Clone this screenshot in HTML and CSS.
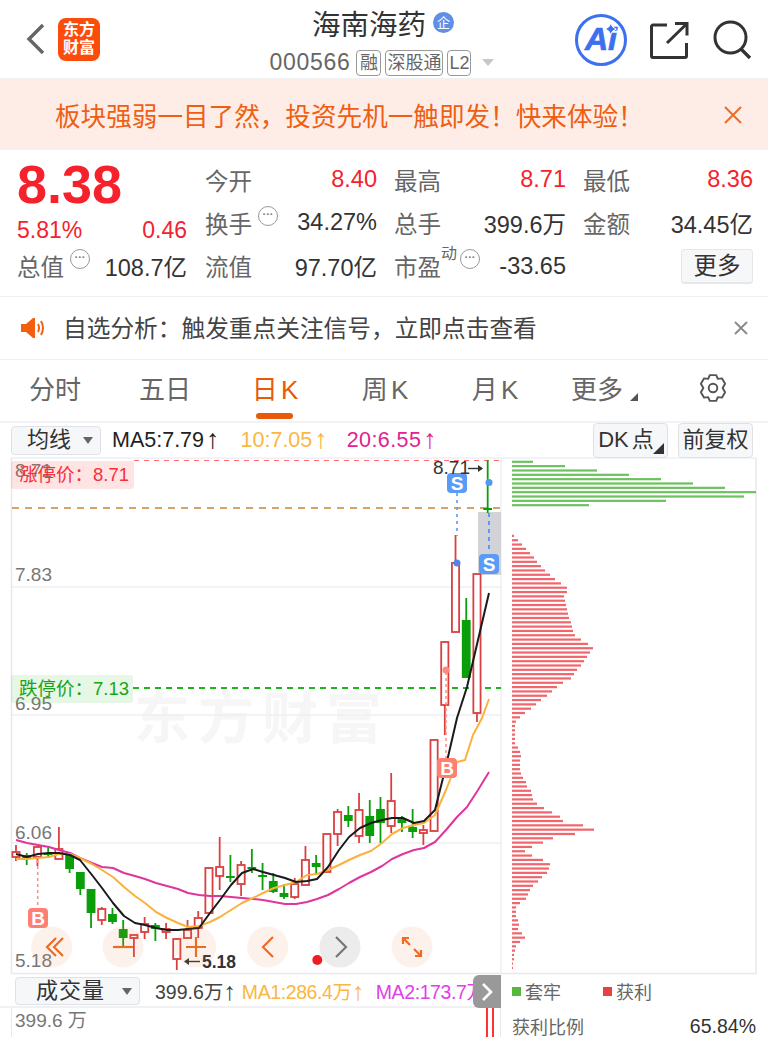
FILE: index.html
```html
<!DOCTYPE html>
<html lang="zh-CN">
<head>
    <meta charset="UTF-8">
    <meta name="viewport" content="width=device-width, initial-scale=1.0">
    <title>海南海药</title>
    <link rel="stylesheet" href="styles.css">
</head>
<body>
    <header class="header">
        <svg class="back" width="20" height="32" viewBox="0 0 20 32"><path d="M17 2 3 16l14 14" fill="none" stroke="#666" stroke-width="3.4"/></svg>
        <div class="logo"><span>东方</span><span>财富</span></div>
        <div class="title-box">
            <div class="title">海南海药<span class="qi">企</span></div>
            <div class="sub">
                <span class="code">000566</span>
                <span class="tag tag-rong">融</span><span class="tag">深股通</span><span class="tag">L2</span>
                <span class="caret"></span>
            </div>
        </div>
        <div class="head-icons">
            <svg width="54" height="54" viewBox="0 0 54 54">
                <circle cx="27" cy="27" r="24.5" fill="none" stroke="#3c70ee" stroke-width="3"/>
                <text x="27" y="37" class="ai-text">Ai</text>
                <path d="M36.700 10.500l2 3.500 3.500 2-3.500 2-2 3.500-2-3.500-3.500-2 3.500-2z" fill="#3c70ee" stroke="#fff" stroke-width="1"/>
            </svg>
            <svg class="share" width="40" height="38" viewBox="0 0 40 38"><path d="M17 4H3a1.500 1.500 0 0 0-1.500 1.500V35A1.500 1.500 0 0 0 3 36.500h32a1.500 1.500 0 0 0 1.500-1.500V22M25 2.500h12v12M36.500 3 17 22" fill="none" stroke="#333" stroke-width="3"/></svg>
            <svg class="search" width="40" height="40" viewBox="0 0 40 40"><circle cx="17.500" cy="17.500" r="15.500" fill="none" stroke="#333" stroke-width="3"/><path d="M28 29l9 9" stroke="#333" stroke-width="3.400"/></svg>
        </div>
    </header>

    <div class="banner">
        <span class="banner-text">板块强弱一目了然，投资先机一触即发！快来体验！</span>
        <svg width="20" height="20" viewBox="0 0 20 20"><path d="M2 2l16 16M18 2 2 18" stroke="#ee6a26" stroke-width="2"/></svg>
    </div>

    <section class="quote">
        <div class="quote-left">
            <div class="price">8.38</div>
            <div class="row change"><span>5.81%</span><span>0.46</span></div>
            <div class="row"><span class="lbl">总值<i class="more-dot">···</i></span><span>108.7亿</span></div>
        </div>
        <div class="quote-grid">
            <div class="row"><span class="lbl">今开</span><span class="up">8.40</span></div>
            <div class="row"><span class="lbl">最高</span><span class="up">8.71</span></div>
            <div class="row"><span class="lbl">最低</span><span class="up">8.36</span></div>
            <div class="row"><span class="lbl">换手<i class="more-dot">···</i></span><span>34.27%</span></div>
            <div class="row"><span class="lbl">总手</span><span>399.6万</span></div>
            <div class="row"><span class="lbl">金额</span><span>34.45亿</span></div>
            <div class="row"><span class="lbl">流值</span><span>97.70亿</span></div>
            <div class="row"><span class="lbl">市盈<sup>动</sup><i class="more-dot">···</i></span><span>-33.65</span></div>
            <div class="row row-end"><button class="more-btn">更多</button></div>
        </div>
    </section>

    <div class="notice">
        <svg width="26" height="24" viewBox="0 0 26 24">
            <path d="M1 8h5l7-6h2v20h-2l-7-6H1z" fill="#f2600f"/>
            <path d="M18 8q2 4 0 8M21 5q4 7 0 14" fill="none" stroke="#f2600f" stroke-width="2"/>
        </svg>
        <span class="notice-text">自选分析：触发重点关注信号，立即点击查看</span>
        <svg width="14" height="14" viewBox="0 0 14 14"><path d="M1 1l12 12M13 1 1 13" stroke="#888" stroke-width="1.800"/></svg>
    </div>

    <nav class="tabs">
        <span class="tab">分时</span>
        <span class="tab">五日</span>
        <span class="tab active">日 K</span>
        <span class="tab">周 K</span>
        <span class="tab">月 K</span>
        <span class="tab tab-more">更多</span>
        <svg class="gear" width="30" height="30" viewBox="0 0 28 28">
            <path d="M11 2h6l1.500 3.500 3.800-.5 3 5-2.300 4 2.300 4-3 5-3.800-.5L17 26h-6l-1.500-3.500-3.800.5-3-5L5 14l-2.300-4 3-5 3.800.5z" fill="none" stroke="#555" stroke-width="1.800" stroke-linejoin="round"/>
            <circle cx="14" cy="14" r="4" fill="none" stroke="#555" stroke-width="1.800"/>
        </svg>
    </nav>

    <div class="toolbar">
        <div class="select select-ma">均线<span class="sel-caret"></span></div>
        <span class="ma ma5">MA5:7.79<span class="arrow">↑</span></span>
        <span class="ma ma10">10:7.05<span class="arrow">↑</span></span>
        <span class="ma ma20">20:6.55<span class="arrow">↑</span></span>
        <div class="select select-dk">DK 点<span class="corner"></span></div>
        <div class="select select-fq">前复权</div>
    </div>

    <div class="chart">
        <svg id="kline" class="chart-svg" width="768" height="518" viewBox="0 457 768 518"></svg>
    </div>

    <div class="bottom">
        <div class="vol">
            <div class="vol-bar">
                <div class="select select-vol">成交量<span class="sel-caret"></span></div>
                <span class="ma vol-now">399.6万<span class="arrow">↑</span></span>
                <span class="ma ma10 vol-ma1">MA1:286.4万<span class="arrow">↑</span></span>
                <span class="ma vol-ma2">MA2:173.7万<span class="arrow">↑</span></span>
            </div>
            <div class="vol-chart">
                <span class="vol-axis">399.6 万</span>
                <div class="vol-candle"></div>
            </div>
            <div class="expander">
                <svg width="12" height="20" viewBox="0 0 12 20"><path d="M2 2l8 8-8 8" fill="none" stroke="#fff" stroke-width="2.600"/></svg>
            </div>
        </div>
        <div class="stats">
            <div class="legend">
                <span class="leg leg-green">套牢</span>
                <span class="leg leg-red">获利</span>
            </div>
            <div class="ratio"><span>获利比例</span><span class="ratio-val">65.84%</span></div>
        </div>
    </div>

    <script src="chart.js"></script>
</body>
</html>
```

FILE: styles.css
```css
* {
    box-sizing: border-box;
}
body {
    margin: 0;
    width: 768px;
    height: 1037px;
    overflow: hidden;
    background-color: #fff;
    color: #333;
    font-family: "Liberation Sans", "Noto Sans CJK SC", sans-serif;
}

/* top bar */
.header {
    position: relative;
    display: flex;
    align-items: center;
    height: 80px;
    border-bottom: 2px solid #f1f1f1;
    padding-left: 26px;
}
.back {
    margin-right: 12px;
}
.logo {
    display: flex;
    flex-direction: column;
    align-items: center;
    justify-content: center;
    width: 42px;
    height: 43px;
    background-color: #fb4c0c;
    border-radius: 8px;
    color: #fff;
    font-size: 16px;
    font-weight: 700;
    line-height: 18px;
}
.title-box {
    position: absolute;
    left: 0;
    top: 3px;
    width: 768px;
    text-align: center;
}
.title {
    display: flex;
    align-items: center;
    justify-content: center;
    gap: 7px;
    height: 38px;
    padding-right: 2px;
    font-size: 28.5px;
    color: #333;
}
.qi {
    width: 21px;
    height: 21px;
    border-radius: 50%;
    background-color: #5f8fe6;
    color: #fff;
    font-size: 13px;
    line-height: 21px;
    text-align: center;
}
.sub {
    display: flex;
    align-items: center;
    justify-content: center;
    gap: 4px;
    margin-top: 8px;
    padding-right: 4px;
}
.code {
    font-size: 23px;
    letter-spacing: 0.7px;
    color: #666;
    margin-right: 2px;
}
.tag {
    height: 26px;
    padding: 0 1px;
    border: 1px solid #999;
    border-radius: 4px;
    font-size: 18px;
    line-height: 24px;
    color: #666;
}
.tag-rong {
    padding: 0 2.5px;
}
.caret {
    width: 0;
    height: 0;
    margin-left: 7px;
    border-left: 6px solid transparent;
    border-right: 6px solid transparent;
    border-top: 7px solid #c8c8c8;
}
.head-icons {
    position: absolute;
    left: 574px;
    top: 13px;
    display: flex;
    align-items: center;
    gap: 23px;
}
.ai-text {
    font-family: "Liberation Sans", sans-serif;
    font-size: 32px;
    font-weight: 700;
    font-style: italic;
    fill: #3c70ee;
    stroke: #3c70ee;
    stroke-width: 0.7px;
    text-anchor: middle;
}
.share {
    margin-left: -1px;
}

/* banner */
.banner {
    display: flex;
    align-items: center;
    justify-content: space-between;
    height: 70px;
    padding: 0 25px 0 55px;
    background-color: #fdede6;
    color: #ee5f14;
}
.banner-text {
    margin-top: -2px;
    font-size: 25.600px;
}

/* quote block */
.quote {
    display: flex;
    height: 147px;
    padding: 0 15px 0 17px;
    border-bottom: 1px solid #f0f0f0;
    font-size: 23.500px;
    color: #333;
}
.quote-left {
    width: 172px;
    margin-right: 17px;
}
.price {
    height: 65px;
    padding-top: 4px;
    color: #f5222d;
    font-size: 54px;
    font-weight: 700;
    line-height: 60px;
}
.change {
    height: 31px;
    margin-bottom: 2px;
    color: #f5222d;
    font-size: 23px;
}
.row {
    display: flex;
    align-items: center;
    justify-content: space-between;
    white-space: nowrap;
}
.quote-left .row:last-child {
    height: 36px;
}
.quote-grid {
    flex: 1;
    display: grid;
    grid-template-columns: 172px 172px 170px;
    grid-template-rows: 43px 43px 44px;
    column-gap: 17px;
    padding-top: 8px;
    padding-left: 1px;
}
.up {
    color: #f5222d;
}
.lbl {
    display: flex;
    align-items: flex-start;
    color: #666;
}
.lbl sup {
    font-size: 16px;
    line-height: 18px;
    margin-top: -4px;
}
.more-dot {
    width: 20px;
    height: 20px;
    margin: 0 0 0 6px;
    border: 1px solid #999;
    border-radius: 50%;
    color: #777;
    font-size: 11px;
    font-style: normal;
    font-weight: 700;
    line-height: 15px;
    text-align: center;
}
sup + .more-dot {
    margin-left: 3px;
}
.row-end {
    justify-content: flex-end;
}
.more-btn {
    width: 72px;
    height: 35px;
    padding: 0;
    background-color: #f6f7f9;
    border: 1px solid #e6e7ea;
    border-bottom-width: 2px;
    border-radius: 4px;
    color: #333;
    font-family: inherit;
    font-size: 23.500px;
    line-height: 30px;
}

/* notice */
.notice {
    display: flex;
    align-items: center;
    height: 63px;
    padding: 0 20px 0 20px;
    border-bottom: 1px solid #f0f0f0;
}
.notice-text {
    flex: 1;
    margin-left: 17px;
    margin-top: -3px;
    font-size: 23.700px;
    color: #444;
}

/* period tabs */
.tabs {
    display: flex;
    align-items: center;
    height: 63px;
    padding-bottom: 6px;
    border-bottom: 2px solid #f3f3f5;
}
.tab {
    position: relative;
    width: 110px;
    text-align: center;
    font-size: 26px;
    word-spacing: -4px;
    color: #666;
}
.active {
    color: #e85a0a;
}
.active::after {
    content: "";
    position: absolute;
    left: 36px;
    top: 44px;
    width: 37px;
    height: 6px;
    border-radius: 3px;
    background-color: #e85a0a;
}
.tab-more {
    margin-left: -8px;
}
.tab-more::after {
    content: "";
    position: absolute;
    right: 14px;
    bottom: 5px;
    border-left: 8px solid transparent;
    border-bottom: 8px solid #555;
}
.gear {
    margin-left: 46px;
}

/* ma toolbar */
.toolbar {
    position: relative;
    display: flex;
    align-items: center;
    height: 34px;
    padding-left: 11px;
    white-space: nowrap;
}
.select {
    position: relative;
    background-color: #f6f7f9;
    border: 1px solid #dfe1e6;
    border-radius: 4px;
    color: #333;
    font-size: 22px;
}
.select-ma {
    width: 90px;
    height: 29px;
    padding-left: 15px;
    line-height: 26px;
}
.sel-caret {
    position: absolute;
    right: 7px;
    top: 10px;
    border-left: 5px solid transparent;
    border-right: 5px solid transparent;
    border-top: 7px solid #666;
}
.ma {
    font-size: 21.500px;
}
.arrow {
    margin-left: 2px;
    font-size: 27px;
    line-height: 20px;
    vertical-align: -1px;
}
.ma5 {
    margin-left: 11px;
    color: #222;
}
.ma10 {
    color: #fbb640;
}
.toolbar .ma10 {
    margin-left: 21px;
}
.ma20 {
    margin-left: 19px;
    letter-spacing: 0.4px;
    color: #e5208f;
}
.select-dk,
.select-fq {
    position: absolute;
    top: 0;
    height: 35px;
    text-align: center;
    line-height: 31px;
}
.select-dk {
    left: 593px;
    width: 75px;
    padding-right: 9px;
    word-spacing: -3px;
}
.select-fq {
    left: 678px;
    width: 75px;
}
.corner {
    position: absolute;
    right: 3px;
    bottom: 3px;
    border-left: 11px solid transparent;
    border-bottom: 11px solid #333;
}

/* kline */
.chart {
    height: 518px;
}
.chart-svg {
    display: block;
}
.axis-text {
    font-size: 19px;
    fill: #777;
}
.limit-text {
    font-size: 18.500px;
}
.mark-text {
    font-size: 19px;
    fill: #333;
}
.mark-bold {
    font-size: 17.500px;
    font-weight: 700;
}
.badge-text {
    font-size: 19px;
    font-weight: 700;
    fill: #fff;
    text-anchor: middle;
}
.watermark {
    font-size: 56px;
    font-weight: 700;
    letter-spacing: 8px;
    fill: #f6f6f6;
}

/* volume + stats */
.bottom {
    display: flex;
    height: 62px;
}
.vol {
    position: relative;
    width: 501px;
    flex: none;
    overflow: hidden;
}
.vol-bar {
    display: flex;
    align-items: center;
    height: 33px;
    padding-left: 15px;
    border-bottom: 2px solid #f1f1f4;
    white-space: nowrap;
}
.select-vol {
    flex: none;
    width: 125px;
    height: 28px;
    padding-left: 20px;
    line-height: 25px;
    letter-spacing: 1px;
}
.vol-bar .ma {
    flex: none;
    font-size: 19.500px;
}
.vol-bar .arrow {
    margin-left: 0;
    font-size: 25px;
}
.vol-now {
    margin-left: 15px;
    color: #444;
}
.vol-bar .vol-ma1 {
    margin-left: 6px;
    letter-spacing: -0.4px;
}
.vol-ma2 {
    margin-left: 12px;
    letter-spacing: -0.4px;
    color: #e040e8;
}
.vol-chart {
    position: relative;
    height: 29px;
    margin-left: 11px;
    border-left: 1px solid #e6e8ee;
    border-right: 1px solid #e6e8ee;
}
.vol-axis {
    position: absolute;
    left: 3px;
    top: -3px;
    font-size: 19px;
    color: #777;
}
.vol-candle {
    position: absolute;
    left: 474px;
    top: 0;
    width: 8px;
    height: 29px;
    border: 2px solid #f33;
    border-top: none;
    border-bottom: none;
}
.expander {
    position: absolute;
    left: 473px;
    top: 0;
    display: flex;
    align-items: center;
    justify-content: center;
    width: 28px;
    height: 33px;
    background-color: #999;
    border-radius: 6px 0 0 6px;
}
.stats {
    flex: 1;
    padding: 1px 12px 0 11px;
    color: #666;
    font-size: 18px;
}
.legend {
    display: flex;
    height: 30px;
    align-items: center;
}
.leg {
    display: flex;
    align-items: center;
    width: 91px;
}
.leg::before {
    content: "";
    width: 9px;
    height: 9px;
    margin-right: 4px;
}
.leg-green::before {
    background-color: #58b83c;
}
.leg-red::before {
    background-color: #ea4040;
}
.ratio {
    display: flex;
    justify-content: space-between;
    align-items: center;
    margin-top: 7px;
}
.ratio-val {
    color: #333;
    font-size: 19.500px;
}
```

FILE: chart.js
```js
// type: r = hollow red, g = filled green. [type, high, bodyTop, bodyBottom, low]
const candles = [
    ["r", 845, 852, 857, 861], ["g", 853, 855, 858, 865], ["r", 846, 847, 857, 866], ["g", 847, 853, 854, 858],
    ["r", 827, 849, 859, 859], ["g", 855, 855, 869, 873], ["g", 872, 872, 889, 895], ["g", 889, 889, 913, 928],
    ["r", 907, 909, 920, 925], ["g", 908, 914, 922, 924], ["g", 920, 929, 938, 947], ["r", 935, 935, 938, 957],
    ["r", 917, 924, 932, 939], ["g", 923, 925, 929, 941], ["r", 923, 929, 932, 939], ["r", 938, 939, 959, 970],
    ["r", 920, 930, 938, 938], ["r", 911, 918, 928, 938], ["r", 867, 868, 913, 913], ["r", 837, 867, 876, 890],
    ["g", 855, 876, 877, 882], ["r", 861, 865, 884, 896], ["g", 849, 867, 869, 873], ["g", 863, 875, 876, 890],
    ["g", 873, 881, 892, 893], ["g", 884, 893, 897, 899], ["r", 878, 884, 897, 899], ["r", 846, 860, 885, 886],
    ["g", 855, 863, 867, 875], ["r", 834, 834, 872, 872], ["r", 809, 812, 834, 846], ["g", 806, 815, 821, 827],
    ["r", 793, 810, 836, 843], ["g", 800, 816, 836, 843], ["g", 797, 809, 823, 843], ["r", 773, 801, 826, 833],
    ["g", 816, 819, 823, 832], ["g", 809, 827, 832, 838], ["r", 825, 830, 833, 845], ["r", 740, 740, 831, 831],
    ["r", 642, 642, 705, 735], ["r", 535, 563, 632, 632], ["g", 598, 620, 678, 678], ["r", 574, 574, 713, 722],
    ["g", 460, 508, 509, 513]
];

const ma5 = "16,854 27,857 38,854 49,853 59,853 70,855 80,860 92,875 102,888 113,903 124,916 135,923 145,925 156,928 167,930 178,930 188,929 199,928 210,913 220,900 231,885 242,873 253,869 263,872 274,875 285,878 296,882 307,881 317,879 328,867 339,850 349,837 360,828 371,823 382,820 392,818 403,818 414,823 424,821 435,810 445,770 457,718 467,687 478,640 489,593";
const ma10 = "16,859 27,859 38,858 49,857 59,854 70,854 80,858 92,864 102,870 113,877 124,887 135,896 145,903 156,912 167,918 178,923 188,927 199,926 210,922 220,917 231,910 242,903 253,898 263,893 274,888 285,885 296,882 307,875 317,874 328,870 339,865 349,860 360,855 371,851 382,843 392,834 403,828 414,825 424,823 435,815 446,790 457,762 465,760 473,735 482,718 489,699";
const ma20 = "16,840 27,843 38,845 49,847 59,850 70,853 80,858 92,863 102,867 113,868 124,873 135,876 145,879 156,883 167,886 178,889 188,893 199,895 210,896 220,896 231,897 242,898 253,899 263,900 274,902 285,904 296,904 307,902 317,899 328,895 339,889 349,883 360,877 371,872 382,866 392,859 403,854 414,850 424,848 435,842 446,830 457,817 467,807 478,790 489,772";

// right panel, px width of every row
const greenBars = [21, 53, 85, 117, 149, 181, 213, 244, 232, 154, 77];
const redBars = [
    2, 6, 10, 14, 18, 22, 25, 29, 33, 38, 43, 49, 55, 55, 52, 53, 54, 55, 56, 57, 59, 60, 61, 63, 69, 76, 81, 78, 75,
    72, 69, 65, 62, 59, 51, 45, 40, 35, 29, 24, 19, 13, 8, 4, 3, 3, 3, 3, 3, 6, 8, 9, 8, 8, 8, 9, 11, 14, 15, 19, 20,
    21, 25, 32, 40, 48, 51, 71, 82, 63, 41, 31, 20, 13, 20, 31, 38, 37, 35, 30, 26, 21, 18, 16, 14, 8, 4, 4, 4, 6, 7,
    6, 10, 13, 8, 4, 3, 2, 2, 1, 1
];

const svg = document.getElementById("kline");
let html = "";

function line(x1, y1, x2, y2, color, width, dash) {
    html += `<line x1="${x1}" y1="${y1}" x2="${x2}" y2="${y2}" stroke="${color}" stroke-width="${width}"${dash ? ` stroke-dasharray="${dash}"` : ""}/>`;
}
function rect(x, y, w, h, color, rx) {
    html += `<rect x="${x}" y="${y}" width="${w}" height="${h}" fill="${color}" rx="${rx || 0}"/>`;
}
function text(x, y, str, cls, color) {
    html += `<text x="${x}" y="${y}" class="${cls}"${color ? ` fill="${color}"` : ""}>${str}</text>`;
}
function poly(points, color, width) {
    html += `<polyline points="${points}" fill="none" stroke="${color}" stroke-width="${width}" stroke-linejoin="round"/>`;
}
function badge(x, y, letter, color) {
    rect(x, y, 20, 20, color, 4);
    text(x + 10, y + 16.5, letter, "badge-text");
}

// watermark and grid
text(134, 738, "东方财富", "watermark");
[587, 715, 843].forEach(y => line(11, y, 501, y, "#eeeff3", 1.5));
line(11, 973.5, 756, 973.5, "#e6e8ee", 1.5);
line(11, 458, 756, 458, "#eeeff3", 1.5);
line(11.5, 458, 11.5, 974, "#e6e8ee", 1.5);
line(501, 458, 501, 974, "#eeeff3", 1.5);
line(756, 458, 756, 974, "#e6e8ee", 1.5);

// axis labels
text(15, 477, "8.71", "axis-text");
text(15, 581, "7.83", "axis-text");
text(15, 710, "6.95", "axis-text");
text(15, 839, "6.06", "axis-text");
text(15, 967, "5.18", "axis-text");

// limit lines
line(134, 460.5, 501, 460.5, "#ff6b6b", 1.2, "5 5");
line(12, 508, 501, 508, "#d6a266", 2, "7 6");
line(133, 688, 501, 688, "#1fb31f", 2, "6 5");
rect(11, 461, 123, 28, "rgba(255,90,90,.16)", 3);
text(19, 481, "涨停价：8.71", "limit-text", "#f5303a");
rect(11, 675, 122, 28, "rgba(60,190,60,.13)", 3);
text(19, 695, "跌停价：7.13", "limit-text", "#1aa31a");

// grey box behind the last S
rect(478, 512, 23, 63, "#d2d3d8");

// candles
candles.forEach((c, i) => {
    const x = 16 + i * 10.72;
    const color = c[0] === "r" ? "#d94040" : "#0a9e0a";
    line(x, c[1], x, c[4], color, 1.8);
    if (c[0] === "r") {
        html += `<rect x="${x - 3.6}" y="${c[2]}" width="7.2" height="${c[3] - c[2]}" fill="#fff" stroke="${color}" stroke-width="1.8"/>`;
    } else {
        rect(x - 4.4, c[2], 8.8, Math.max(c[3] - c[2], 2), color);
    }
});

// moving averages
poly(ma20, "#e0359c", 2);
poly(ma10, "#fbb13c", 2);
poly(ma5, "#1a1a1a", 2);

// B / S marks
line(37.7, 860, 37.7, 908, "#ff8a80", 1.5, "3 3");
badge(28, 908, "B", "#ff7f72");
line(446, 672, 446, 758, "#ff8a80", 1.5, "3 3");
html += `<circle cx="446" cy="670" r="3.5" fill="#ff8a80"/>`;
badge(437, 758, "B", "#ff7f72");
line(457, 493, 457, 536, "#6aa6f5", 1.8, "3 4");
html += `<circle cx="457" cy="563" r="3.500" fill="#4f86e8"/>`;
badge(447, 473, "S", "#5a9cf5");
line(489, 513, 489, 552, "#5a8fe8", 1.8, "4 4");
html += `<circle cx="489" cy="482.5" r="3.500" fill="#4f9af0"/>`;
badge(479, 554, "S", "#5a9cf5");

// high / low price marks
text(433, 474, "8.71", "mark-text");
line(468, 468.500, 482, 468.500, "#333", 1.4);
html += `<path d="M478 465l5 3.500-5 3.500z" fill="#333"/>`;
text(202, 968, "5.18", "mark-text mark-bold");
line(186, 961.500, 200, 961.500, "#333", 1.4);
html += `<path d="M189 958l-5 3.500 5 3.500z" fill="#333"/>`;

// right panel bars
greenBars.forEach((w, i) => rect(512, 460.7 + i * 4.34, w, 2.2, "#6cc25e"));
redBars.forEach((w, i) => rect(512, 534.8 + i * 4.32, w, 2.2, "#f0666c"));

// floating round buttons
const btnFill = "rgba(240,130,70,.11)";
[[51.7, btnFill], [123, btnFill], [195.7, btnFill], [267.7, btnFill], [340, "rgba(210,210,210,.42)"], [412, btnFill]].forEach(b => {
    html += `<circle cx="${b[0]}" cy="947" r="20.500" fill="${b[1]}"/>`;
});
const orange = 'fill="none" stroke="#ef6a22" stroke-width="2.200"';
html += `<path d="M56 938l-9 9 9 9M63 938l-9 9 9 9" ${orange}/>`;
html += `<path d="M113 947h20" ${orange}/>`;
html += `<path d="M186 947h20M196 937v20" ${orange}/>`;
html += `<path d="M273 937l-10 10 10 10" ${orange}/>`;
html += `<path d="M336 937l10 10-10 10" fill="none" stroke="#777" stroke-width="2.200"/>`;
html += `<path d="M403 944v-6h6M404 939l6 6M421 950v6h-6M420 955l-6-6" ${orange}/>`;
html += `<circle cx="317.300" cy="960" r="5" fill="#f01c24"/>`;

svg.innerHTML = html;
```
